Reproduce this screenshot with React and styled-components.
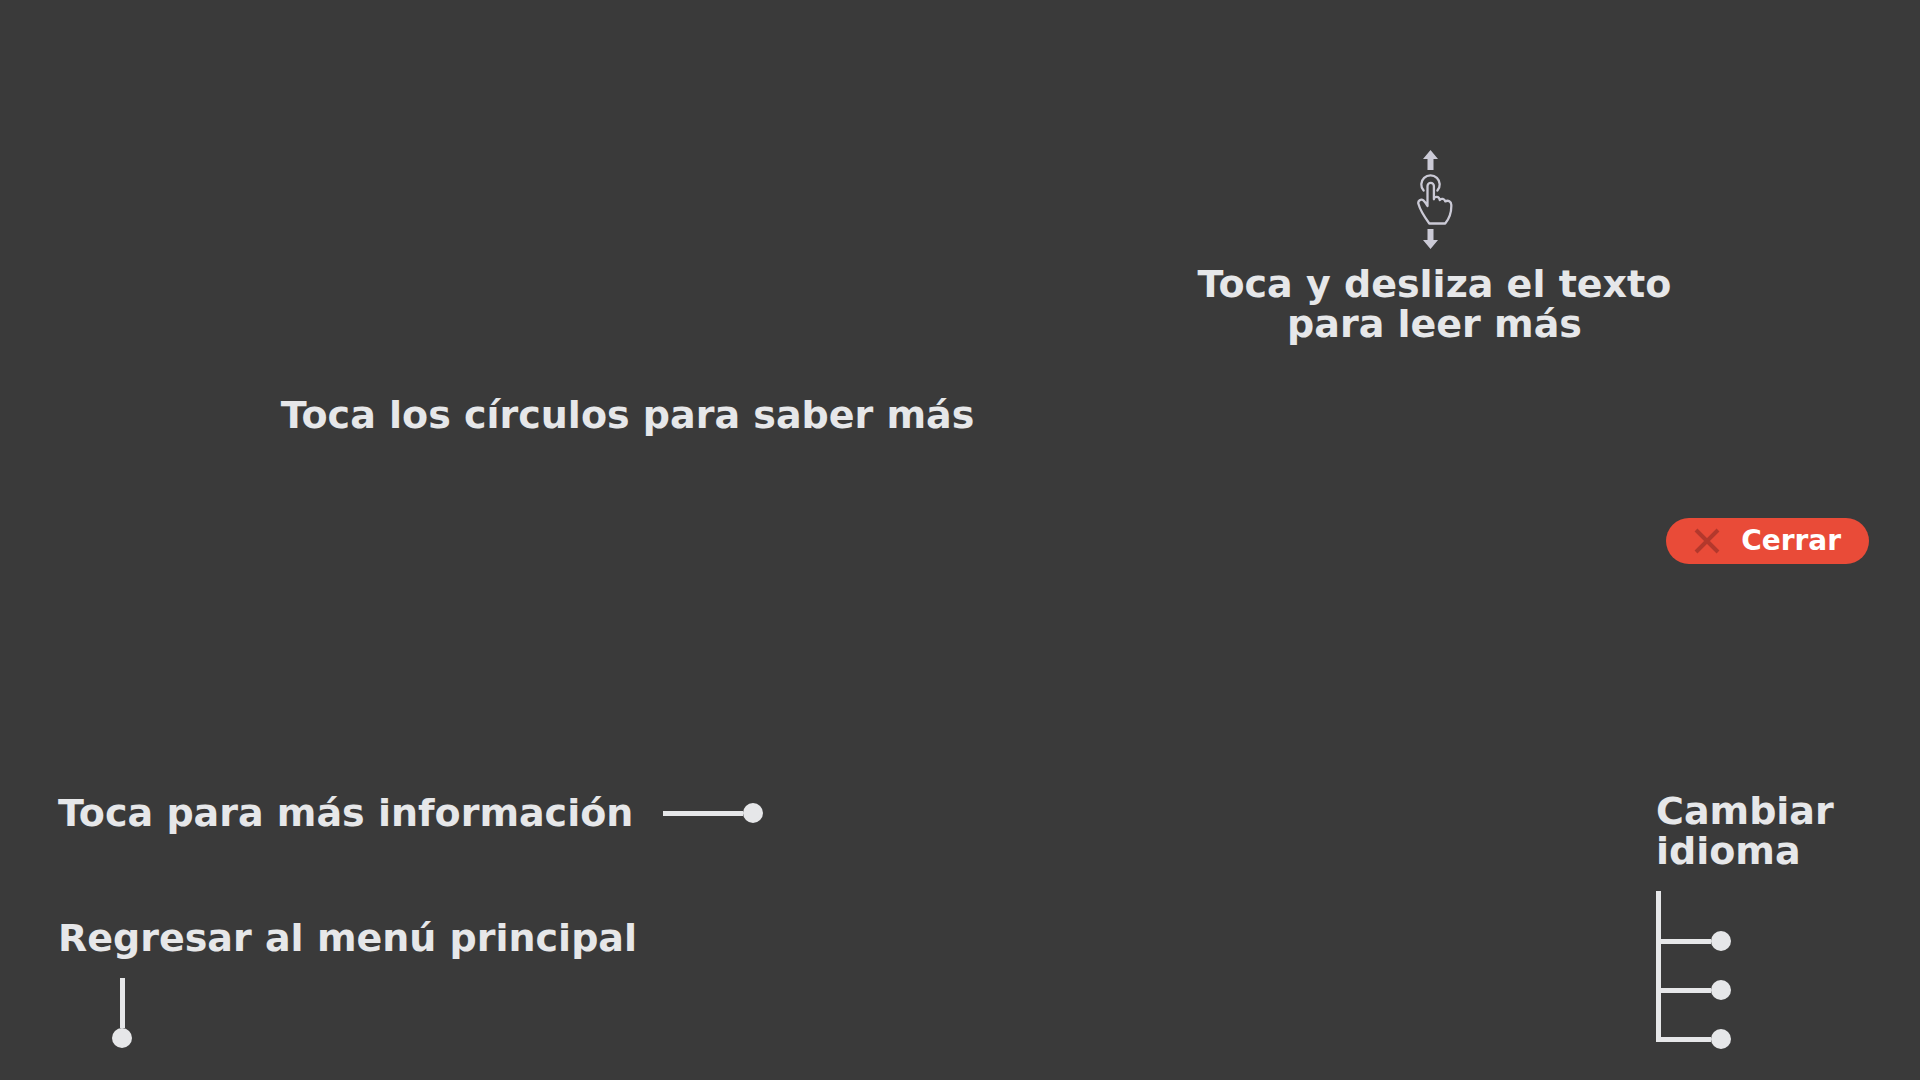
import React from "react";
import styled, { createGlobalStyle } from "styled-components";

const ink = "#e6e7e9";

const GlobalStyle = createGlobalStyle`
  *, *::before, *::after { box-sizing: border-box; }
  body {
    margin: 0;
    background: #3a3a3a;
    color: ${ink};
    font-family: "DejaVu Sans", Inter, sans-serif;
  }
`;

const Page = styled.main`
  display: flex;
  flex-direction: column;
  min-height: 100vh;
`;

const Hints = styled.section`
  display: grid;
  grid-template-columns: 1fr 1fr;
  align-items: end;
  padding: 150px 82px 0 224px;
`;

const Label = styled.p`
  margin: 0;
  font-size: 38px;
  line-height: 40px;
  font-weight: 700;
  text-align: ${(p) => p.$align || "left"};
`;

const CirclesHint = styled.div`
  padding-top: 245px;
`;

const SwipeHint = styled.div`
  display: flex;
  flex-direction: column;
  align-items: center;
  align-self: start;
  gap: 14px;
`;

const CloseRow = styled.div`
  display: flex;
  justify-content: flex-end;
  padding: 83px 51px 0;
`;

const CloseButton = styled.button`
  display: flex;
  align-items: center;
  gap: 21px;
  height: 46px;
  padding: 0 28px;
  border: 0;
  border-radius: 23px;
  background: #e94b38;
  color: #fff;
  font-family: inherit;
  font-size: 28px;
  line-height: 34px;
  font-weight: 700;
  cursor: pointer;
`;

const Guides = styled.section`
  display: flex;
  justify-content: space-between;
  align-items: flex-start;
  margin-top: auto;
  padding: 0 51px 31px 58px;
`;

const GuideList = styled.div`
  display: flex;
  flex-direction: column;
  gap: 85px;
  padding-top: 2px;
`;

const InlineGuide = styled.div`
  display: flex;
  align-items: center;
  gap: 30px;
`;

const MenuGuide = styled.div`
  display: flex;
  flex-direction: column;
  gap: 20px;
`;

const Connector = styled.span`
  display: flex;
  flex-direction: ${(p) => (p.$vertical ? "column" : "row")};
  align-items: center;
  width: ${(p) => (p.$vertical ? "20px" : "auto")};
  margin-left: ${(p) => (p.$vertical ? "54px" : "0")};

  &::before {
    content: "";
    width: ${(p) => (p.$vertical ? 5 : p.$length)}px;
    height: ${(p) => (p.$vertical ? p.$length : 5)}px;
    background: ${ink};
  }

  &::after {
    content: "";
    width: 20px;
    height: 20px;
    border-radius: 50%;
    background: ${ink};
  }
`;

const LanguageGuide = styled.div`
  width: 213px;
`;

const Tree = styled.div`
  display: flex;
  align-items: flex-start;
  margin-top: 20px;
`;

const Trunk = styled.span`
  width: 5px;
  height: 151px;
  background: ${ink};
`;

const Branches = styled.div`
  display: flex;
  flex-direction: column;
  gap: 29px;
  padding-top: 40px;
`;

const SwipeIcon = () => (
  <svg width="36" height="100" viewBox="0 0 36 100" fill="none" aria-hidden="true">
    <path
      d="M13.5 0 21 9h-4.5v11h-6V9H6zM13.5 99 6 90h4.5V79h6v11H21z"
      fill="#cbcad6"
    />
    <g stroke="#cbcad6" strokeWidth="2.3" strokeLinecap="round" strokeLinejoin="round">
      <path d="M6.6 40.6a9.2 9.2 0 1 1 13.8 0" />
      <path d="M10.5 56V36a3.2 3.2 0 0 1 6.4 0v13.3c0-3.4 5.4-3.4 5.9.7 1.3-2 4.9-1.3 5.4 1.4 3-1.7 6 .2 6.1 3.3.3 7.8-1.1 12.9-6.1 18.8H12.3C7.5 67 3.2 60.4 1.4 53.8c-.8-3 2.6-5.5 5-3.4 1.5 1.3 3 3.6 4.1 5.6" />
    </g>
  </svg>
);

const CloseIcon = () => (
  <svg width="26" height="26" viewBox="0 0 26 26" fill="none" aria-hidden="true">
    <path d="M2 2l22 22M24 2 2 24" stroke="#b3382c" strokeWidth="4" />
  </svg>
);

export default function App() {
  return (
    <>
      <GlobalStyle />
      <Page>
        <Hints>
          <CirclesHint>
            <Label $align="center">Toca los círculos para saber más</Label>
          </CirclesHint>
          <SwipeHint>
            <SwipeIcon />
            <Label $align="center">
              Toca y desliza el texto
              <br />
              para leer más
            </Label>
          </SwipeHint>
        </Hints>
        <CloseRow>
          <CloseButton type="button">
            <CloseIcon />
            Cerrar
          </CloseButton>
        </CloseRow>
        <Guides>
          <GuideList>
            <InlineGuide>
              <Label>Toca para más información</Label>
              <Connector $length={80} />
            </InlineGuide>
            <MenuGuide>
              <Label>Regresar al menú principal</Label>
              <Connector $vertical $length={50} />
            </MenuGuide>
          </GuideList>
          <LanguageGuide>
            <Label>
              Cambiar
              <br />
              idioma
            </Label>
            <Tree>
              <Trunk />
              <Branches>
                <Connector $length={50} />
                <Connector $length={50} />
                <Connector $length={50} />
              </Branches>
            </Tree>
          </LanguageGuide>
        </Guides>
      </Page>
    </>
  );
}
